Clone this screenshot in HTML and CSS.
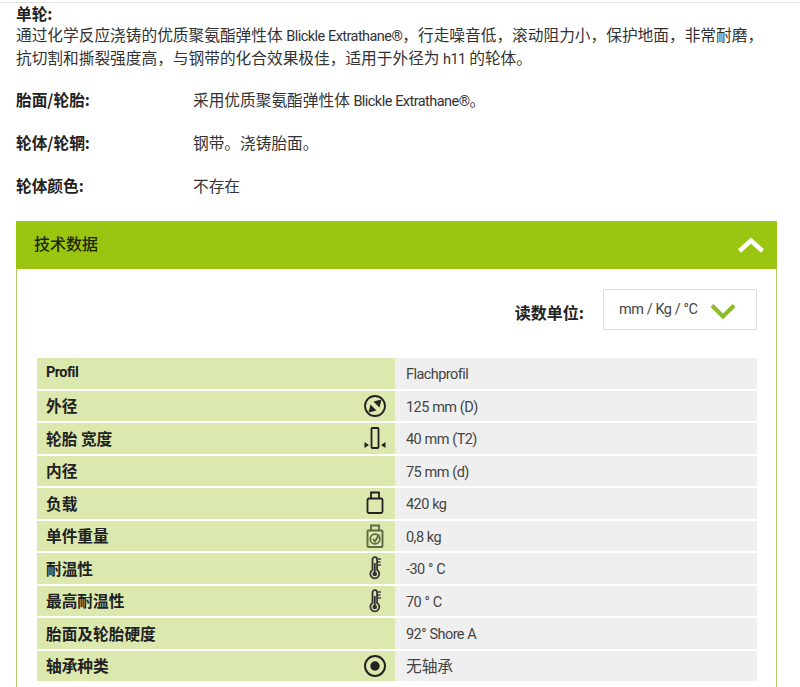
FILE: index.html
```html
<!DOCTYPE html>
<html lang="zh">
<head>
<meta charset="utf-8">
<title>技术数据</title>
<link rel="stylesheet" href="styles.css">
</head>
<body>
<main class="page">
  <section class="intro">
    <h2 class="intro-title">单轮:</h2>
    <p class="intro-text">通过化学反应浇铸的优质聚氨酯弹性体 <span class="lat">Blickle Extrathane®</span>&#65292;行走噪音低&#65292;滚动阻力小&#65292;保护地面&#65292;非常耐磨&#65292;<br>抗切割和撕裂强度高&#65292;与钢带的化合效果极佳&#65292;适用于外径为 <span class="lat">h11</span> 的轮体。</p>
  </section>
  <dl class="specs">
    <div class="spec"><dt>胎面/轮胎:</dt><dd>采用优质聚氨酯弹性体 <span class="lat">Blickle Extrathane®</span>。</dd></div>
    <div class="spec"><dt>轮体/轮辋:</dt><dd>钢带。浇铸胎面。</dd></div>
    <div class="spec"><dt>轮体颜色:</dt><dd>不存在</dd></div>
  </dl>
  <section class="panel">
    <header class="panel-head">
      <h3>技术数据</h3>
      <svg class="chev-up" width="28" height="16" viewBox="0 0 28 16"><path d="M2.500 14 14 3.500 25.500 14" fill="none" stroke="#fff" stroke-width="4.500"/></svg>
    </header>
    <div class="panel-body">
      <div class="units">
        <span class="units-label">读数单位:</span>
        <div class="units-select">
          <span class="lat">mm / Kg / °C</span>
          <svg width="26" height="16" viewBox="0 0 26 16"><path d="M2 2.500 13 13.500 24 2.500" fill="none" stroke="#8dbb25" stroke-width="4"/></svg>
        </div>
      </div>
      <div class="table">
        <div class="row"><div class="key"><b class="lat-b">Profil</b></div><div class="val"><span class="lat">Flachprofil</span></div></div>
        <div class="row"><div class="key"><b>外径</b>
          <svg class="ico" width="24" height="24" viewBox="0 0 24 24"><circle cx="12" cy="12" r="10" fill="none" stroke="#222" stroke-width="1.800"/><path d="M18.500 5.500 10.500 7.500 16.500 13.500Z M5.500 18.500 13.500 16.500 7.500 10.500Z" fill="#222"/></svg></div><div class="val"><span class="lat">125 mm (D)</span></div></div>
        <div class="row"><div class="key"><b>轮胎 宽度</b>
          <svg class="ico" width="24" height="24" viewBox="0 0 24 24"><rect x="8.500" y="2" width="7" height="20" rx="1" fill="none" stroke="#222" stroke-width="1.800"/><path d="M6 19 1.500 16v6Z M18 19 22.500 16v6Z" fill="#222"/></svg></div><div class="val"><span class="lat">40 mm (T2)</span></div></div>
        <div class="row"><div class="key"><b>内径</b></div><div class="val"><span class="lat">75 mm (d)</span></div></div>
        <div class="row"><div class="key"><b>负载</b>
          <svg class="ico" width="24" height="24" viewBox="0 0 24 24"><path d="M8 1.500h8v6H8Z M6 7.500h12a1.500 1.500 0 0 1 1.500 1.500v11.500a1.500 1.500 0 0 1-1.500 1.500H6a1.500 1.500 0 0 1-1.500-1.500V9A1.500 1.500 0 0 1 6 7.500Z" fill="none" stroke="#222" stroke-width="1.800"/></svg></div><div class="val"><span class="lat">420 kg</span></div></div>
        <div class="row"><div class="key"><b>单件重量</b>
          <svg class="ico" width="24" height="24" viewBox="0 0 24 24"><path d="M8 1.500h8v5H8Z M5.500 6.500h13a1 1 0 0 1 1 1V22a1 1 0 0 1-1 1h-13a1 1 0 0 1-1-1V7.500a1 1 0 0 1 1-1Z" fill="none" stroke="#5d6b42" stroke-width="1.900"/><circle cx="12" cy="15" r="4.800" fill="none" stroke="#5d6b42" stroke-width="1.800"/><path d="M10 15 12 17.500 16 10.500" fill="none" stroke="#5d6b42" stroke-width="1.800"/></svg></div><div class="val"><span class="lat">0,8 kg</span></div></div>
        <div class="row"><div class="key"><b>耐温性</b>
          <svg class="ico" width="24" height="24" viewBox="0 0 24 24"><path d="M9.500 3.500a2.300 2.300 0 0 1 4.600 0V14a4.500 4.500 0 1 1-4.600 0Z" fill="none" stroke="#333" stroke-width="1.800"/><circle cx="11.800" cy="18" r="2.300" fill="#333"/><path d="M11.800 17V7" stroke="#333" stroke-width="1.800"/><path d="M15 3h3M15 6h2.500M15 9h3" stroke="#444" stroke-width="1.300"/></svg></div><div class="val"><span class="lat">-30 ° C</span></div></div>
        <div class="row"><div class="key"><b>最高耐温性</b>
          <svg class="ico" width="24" height="24" viewBox="0 0 24 24"><path d="M9.500 3.500a2.300 2.300 0 0 1 4.600 0V14a4.500 4.500 0 1 1-4.600 0Z" fill="none" stroke="#333" stroke-width="1.800"/><circle cx="11.800" cy="18" r="2.300" fill="#333"/><path d="M11.800 17V7" stroke="#333" stroke-width="1.800"/><path d="M15 3h3M15 6h2.500M15 9h3" stroke="#444" stroke-width="1.300"/></svg></div><div class="val"><span class="lat">70 ° C</span></div></div>
        <div class="row"><div class="key"><b>胎面及轮胎硬度</b></div><div class="val"><span class="lat">92° Shore A</span></div></div>
        <div class="row"><div class="key"><b>轴承种类</b>
          <svg class="ico" width="24" height="24" viewBox="0 0 24 24"><circle cx="12" cy="12" r="10" fill="none" stroke="#222" stroke-width="2"/><circle cx="12" cy="12" r="4.700" fill="#222"/></svg></div><div class="val">无轴承</div></div>
      </div>
    </div>
  </section>
</main>
</body>
</html>
```

FILE: styles.css
```css
html, body {
  margin: 0;
  height: 687px;
  overflow: hidden;
  background: #fff;
}
body {
  font-family: "Noto Sans CJK SC", "Liberation Sans", sans-serif;
  color: #333;
  font-size: 15.7px;
}
.lat, .lat-b {
  font-family: Roboto, "Liberation Sans", sans-serif;
  font-size: 14.5px;
  letter-spacing: -0.55px;
  word-spacing: 0.3px;
  line-height: 1;
}
.key .lat-b { font-weight: 700; color: #222; }
.page {
  margin-top: 2px;
  border-top: 1px solid #e2e2e2;
  padding: 0 23px 0 16px;
}
.intro-title {
  margin: 0;
  padding-top: 1px;
  font-size: 15.7px;
  line-height: 20px;
  font-weight: 700;
  color: #222;
}
.intro-text {
  margin: 0;
  line-height: 22.500px;
}
.specs { margin: 20px 0 0; }
.spec {
  display: flex;
  height: 43px;
  line-height: 22px;
}
.spec dt {
  width: 177px;
  font-weight: 700;
  color: #222;
}
.spec dd { margin: 0; }
.panel {
  margin-top: 3px;
  border: 1px solid #b5c96a;
  border-top: 0;
}
.panel-head {
  height: 48px;
  margin: 0 -1px;
  padding: 0 12px 0 18px;
  background: #9ac612;
  display: flex;
  align-items: center;
  justify-content: space-between;
}
.panel-head h3 {
  margin: -5px 0 0;
  font-size: 16px;
  font-weight: 500;
  color: #1c2600;
}
.panel-body { padding: 20px 19px 30px 20px; }
.units {
  display: flex;
  justify-content: flex-end;
  align-items: center;
  gap: 19px;
}
.units-label {
  padding-top: 5px;
  font-size: 16px;
  font-weight: 700;
  color: #222;
}
.units-select {
  box-sizing: border-box;
  width: 154px;
  height: 41px;
  border: 1px solid #dedede;
  display: flex;
  align-items: center;
  gap: 13px;
  padding: 2px 0 0 15px;
  color: #444;
}
.table {
  margin-top: 28px;
  display: flex;
  flex-direction: column;
  gap: 2px;
}
.row {
  display: grid;
  grid-template-columns: 358px 362px;
  height: 30.500px;
  line-height: 29px;
}
.key {
  background: #dbe9ae;
  padding: 0 8px 0 9px;
  display: flex;
  align-items: center;
  justify-content: space-between;
  color: #222;
}
.key b { font-weight: 700; }
.val {
  background: #efefef;
  padding-left: 11px;
  color: #444;
}
.ico { flex: none; }
```
